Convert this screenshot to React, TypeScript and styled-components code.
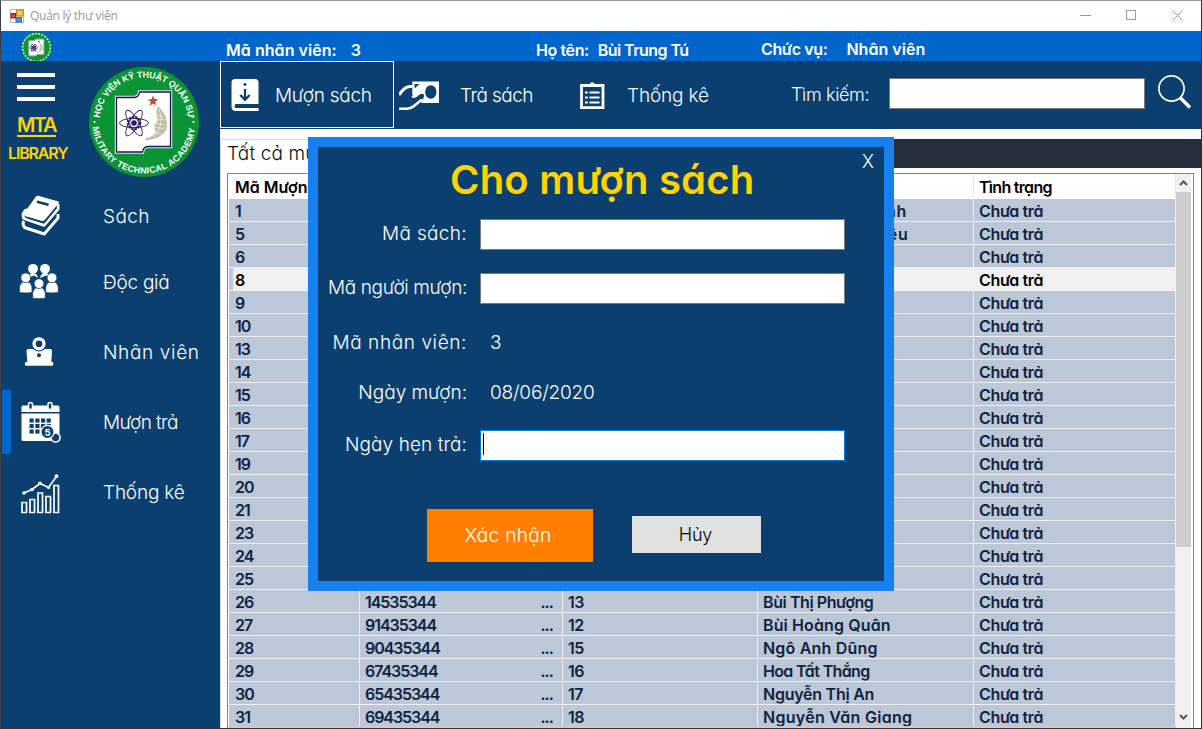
import React from 'react';
import styled, { createGlobalStyle } from 'styled-components';

const navy = '#0b3f6f';
const yellow = '#ffd200';

const Global = createGlobalStyle`
  * { box-sizing: border-box; }
  body { margin: 0; overflow: hidden; }
  body, input, button {
    font-family: Inter, 'Liberation Sans', sans-serif;
    font-feature-settings: 'cv11' 1;
  }
`;

const Window = styled.div`
  position: relative;
  width: 1202px;
  height: 729px;
  overflow: hidden;
  display: flex;
  flex-direction: column;
  background: #fff;
  border: 1px solid #9a9a9a;
  border-left-color: #3b4048;
  border-right-color: #2d3440;
  border-bottom-color: #35353a;
`;

const TitleBar = styled.header`
  flex: none;
  height: 30px;
  display: flex;
  align-items: center;
  padding-left: 9px;
  background: #fff;
`;

const Caption = styled.span`
  flex: 1;
  padding: 0 0 2px 6px;
  font: 12px 'Open Sans', sans-serif;
  letter-spacing: -0.27px;
  color: #999;
`;

const WindowButtons = styled.div`
  display: flex;
  gap: 35px;
  padding: 0 18px 2px 0;
`;

const UserBar = styled.div`
  flex: none;
  height: 30px;
  display: flex;
  background: #0066cc;
  color: #fff;
  overflow: hidden;
`;

const MiniLogoSlot = styled.div`
  width: 225px;
  padding: 1px 0 0 20px;
`;

const UserField = styled.div<{ $width: number; $gap: number; $raise?: number }>`
  width: ${p => p.$width}px;
  display: flex;
  gap: ${p => p.$gap}px;
  padding-top: ${p => 9 - (p.$raise ?? 0)}px;
  line-height: 20px;
`;

const Bold = styled.span<{ $track?: number }>`
  font-size: 16px;
  font-weight: 640;
  letter-spacing: ${p => p.$track ?? 0}px;
  white-space: pre;
`;

const Light = styled.span<{ $track?: number; $size?: number }>`
  font-size: ${p => p.$size ?? 19}px;
  font-weight: 300;
  letter-spacing: ${p => p.$track ?? 0}px;
  white-space: pre;
`;

const Body = styled.div`
  flex: 1;
  min-height: 0;
  display: flex;
`;

const Sidebar = styled.aside`
  flex: none;
  width: 219px;
  background: ${navy};
  color: #fff;
`;

const Brand = styled.div`
  height: 123px;
  display: flex;
`;

const BrandLeft = styled.div`
  width: 87px;
  padding: 12px 0 0 7px;
`;

const Burger = styled.div`
  width: 38px;
  height: 28px;
  margin-left: 9px;
  display: flex;
  flex-direction: column;
  justify-content: space-between;
`;

const BurgerBar = styled.i`
  height: 4px;
  background: #fff;
`;

const BrandLink = styled.div`
  width: max-content;
  margin: 15px 0 0 9px;
  font-size: 20px;
  line-height: 19px;
  font-weight: 600;
  letter-spacing: -1.9px;
  color: ${yellow};
  border-bottom: 2px solid ${yellow};
`;

const BrandSub = styled.div`
  margin-top: 6px;
  font-size: 16px;
  line-height: 20px;
  font-weight: 600;
  letter-spacing: -1.15px;
  color: ${yellow};
`;

const LogoSlot = styled.div`
  padding-top: 5px;
`;

const NavItem = styled.div<{ $active?: boolean; $gap?: number }>`
  height: 64px;
  margin-top: ${p => p.$gap ?? 6}px;
  margin-left: 1px;
  border-left: 9px solid ${p => (p.$active ? '#0066cc' : 'transparent')};
  display: flex;
  align-items: center;
`;

const NavIcon = styled.div<{ $dx?: number; $dy?: number }>`
  width: 92px;
  padding: ${p => p.$dy ?? 0}px 0 0 ${p => 8 + (p.$dx ?? 0)}px;
  display: flex;
`;

const Main = styled.main`
  flex: 1;
  min-width: 0;
  display: flex;
  flex-direction: column;
`;

const Toolbar = styled.div`
  flex: none;
  height: 68px;
  display: flex;
  align-items: flex-start;
  background: ${navy};
  color: #fff;
`;

const Tab = styled.div<{ $width: number; $icon: number; $pad: number; $active?: boolean }>`
  height: 67px;
  width: ${p => p.$width}px;
  display: grid;
  grid-template-columns: ${p => p.$icon}px auto;
  justify-content: start;
  align-items: center;
  padding: 2px 0 0 ${p => p.$pad}px;
  border: 1px solid ${p => (p.$active ? '#fff' : 'transparent')};
`;

const SearchLabel = styled.label`
  width: 98px;
  line-height: 68px;
  height: 68px;
`;

const SearchInput = styled.input`
  width: 256px;
  height: 31px;
  margin: 17px 13px 0 0;
  border: 1px solid #7a7a7a;
  background: #fff;
`;

const SearchIconSlot = styled.div`
  padding-top: 13px;
`;

const Panel = styled.section`
  flex: 1;
  min-height: 0;
  margin-top: 10px;
  display: flex;
  flex-direction: column;
  border-left: 1px solid #d9d9d9;
`;

const PanelHead = styled.div`
  flex: none;
  height: 29px;
  display: flex;
  background: #252e3a;
`;

const PanelTitle = styled.div`
  width: 140px;
  padding-left: 6px;
  line-height: 28px;
  background: #fff;
  color: #111;
  border-top: 1px solid #d9d9d9;
`;

const GridFrame = styled.div`
  flex: 1;
  min-height: 0;
  margin: 5px 7px 0 6px;
  display: flex;
  border: 1px solid #78859b;
  border-bottom: 0;
  padding-right: 1px;
`;

const GridBody = styled.div`
  width: 948px;
  height: 554px;
  overflow: hidden;
  border-bottom: 2px solid #cdcdcd;
`;

const GridRow = styled.div<{ $selected?: boolean; $head?: boolean }>`
  display: grid;
  grid-template-columns: 131px 203px 195px 216px 202px;
  height: ${p => (p.$head ? 25 : 23)}px;
  margin-left: 1px;
  background: ${p => (p.$head ? '#fff' : p.$selected ? '#f0f0f0' : '#bcc7d8')};
  color: ${p => (p.$head || p.$selected ? '#000' : '#10233f')};
  box-shadow: ${p => (p.$selected ? 'inset 4px 0 #bcc7d8' : 'none')};
`;

const Cell = styled.div<{ $head?: boolean }>`
  display: flex;
  align-items: center;
  justify-content: space-between;
  padding: 1px 9px 0 5px;
  overflow: hidden;
  border-right: 1px solid ${p => (p.$head ? '#e5e5e5' : '#f0f0f0')};
  border-bottom: 1px solid ${p => (p.$head ? '#fff' : '#f0f0f0')};
  &:first-child { padding-left: 6px; }
`;

const ScrollBar = styled.div`
  width: 15px;
  display: flex;
  flex-direction: column;
  align-items: center;
  background: #f0f0f0;
  padding: 6px 0 8px;
`;

const Thumb = styled.div`
  width: 15px;
  height: 355px;
  margin: 6px 0 auto;
  background: #cdcdcd;
`;

const Dialog = styled.div`
  position: absolute;
  left: 307px;
  top: 136px;
  width: 586px;
  height: 454px;
  border: 10px solid #1680ee;
  background: ${navy};
  color: #fff;
`;

const Close = styled.button`
  position: absolute;
  right: 10px;
  top: 5px;
  padding: 0;
  border: 0;
  background: none;
  color: #fff;
  font-size: 18px;
  line-height: 20px;
  font-weight: 300;
`;

const DialogTitle = styled.h1`
  margin: 0 0 0 132px;
  height: 72px;
  font-size: 40px;
  line-height: 66px;
  font-weight: 640;
  letter-spacing: 0.2px;
  color: ${yellow};
  white-space: nowrap;
`;

const FormRow = styled.div<{ $gap: number }>`
  height: 31px;
  margin-top: ${p => p.$gap}px;
  display: grid;
  grid-template-columns: 149px 365px;
  column-gap: 13px;
  align-items: center;
`;

const FieldLabel = styled.label<{ $plain?: boolean }>`
  text-align: right;
  line-height: 28px;
  padding-bottom: ${p => (p.$plain ? 0 : 1)}px;
`;

const FieldValue = styled.div`
  padding-left: 10px;
  line-height: 28px;
`;

const Field = styled.div<{ $focus?: boolean }>`
  height: 31px;
  padding: 2px;
  background: #fff;
  border: 1px solid ${p => (p.$focus ? '#0078d7' : '#7a7a7a')};
`;

const Caret = styled.i`
  display: block;
  width: 1px;
  height: 22px;
  background: #000;
`;

const Actions = styled.div`
  display: flex;
  align-items: center;
  gap: 39px;
  padding: 48px 0 0 109px;
`;

const Confirm = styled.button`
  width: 166px;
  height: 53px;
  padding: 0 4px 0 0;
  border: 0;
  background: #ff8000;
  color: #fff;
`;

const Cancel = styled.button`
  width: 129px;
  height: 37px;
  margin-top: -3px;
  padding: 0 2px 0 0;
  border: 0;
  background: #e1e1e1;
  color: #000;
`;

function AcademyLogo({ size, small }: { size: number; small?: boolean }) {
  const petals = [0, 60, 120];
  return (
    <svg width={size} height={size} viewBox="0 0 112 112">
      <defs>
        <path id="arcTop" d="M11.500 56 A44.500 44.500 0 0 1 100.500 56" />
        <path id="arcBottom" d="M4.500 56 A51.500 51.500 0 0 0 107.500 56" />
      </defs>
      <circle cx="56" cy="56" r="55" fill="#0b9435" />
      {small ? (
        <circle cx="56" cy="56" r="50" fill="none" stroke="#e4f6ea" strokeWidth="5" strokeDasharray="7 5" />
      ) : (
        <g fill="#fff" fontFamily="'Liberation Sans', sans-serif" fontWeight="700" fontSize="8.800">
          <text>
            <textPath href="#arcTop" startOffset="4" textLength="132" lengthAdjust="spacing">HỌC VIỆN KỸ THUẬT QUÂN SỰ</textPath>
          </text>
          <text>
            <textPath href="#arcBottom" startOffset="5" textLength="150" lengthAdjust="spacing">MILITARY TECHNICAL ACADEMY</textPath>
          </text>
          <circle cx="6.500" cy="56" r="1" />
          <circle cx="105.500" cy="56" r="1" />
        </g>
      )}
      <path
        d="M28.500 31.500 H46 Q51 31.500 51.500 26 H82.500 V80.500 H60 Q55.500 80.500 54.500 86 H28.500 Z"
        fill="#fff" stroke="#d9ecdf" strokeWidth="3.500"
      />
      <path
        d="M28.500 31.500 H46 Q51 31.500 51.500 26 H82.500 V80.500 H60 Q55.500 80.500 54.500 86 H28.500 Z"
        fill="#fff" stroke="#23105a" strokeWidth="1.300"
      />
      <g fill="none" stroke="#2b1a6b" strokeWidth={small ? 2.5 : 0.9}>
        {petals.map(a => (
          <ellipse key={a} cx="46" cy="57" rx="14.500" ry="4.600" transform={`rotate(${a} 46 57)`} />
        ))}
        <circle cx="46" cy="57" r="6" strokeWidth="2.400" strokeDasharray="2.200 1" />
      </g>
      <circle cx="46" cy="57" r="2.800" fill="#2b1a6b" />
      <path d="M65 29.500 l1.400 3.600 3.900.1 -3.100 2.500 1.200 3.900 -3.400-2.200 -3.300 2.300 1.100-3.900 -3.200-2.400 4-.2z" fill="#c8452f" />
      <path
        d="M70 40 Q82 52 78 64 Q74 72 58.500 74.500 L57 72.500 Q65 71 68 66 Q64 61 70 54 Q67 47 70 40Z"
        fill="#c3bca4"
      />
      <path d="M71 43 Q77 58 66 71 M68 49 l7 2 M69 53 l9 1 M67 57 l10 2 M66 61 l10 2 M65 66 l8 2" fill="none" stroke="#f1eee2" strokeWidth=".8" />
    </svg>
  );
}

const AppIcon = () => (
  <svg width="14" height="14" viewBox="0 0 14 14">
    <rect x=".5" y=".5" width="13" height="13" fill="#fff" stroke="#b5b5b5" />
    <rect x="6.500" y="1" width="6.500" height="6" fill="#fbc93d" stroke="#b98317" />
    <rect x="1" y="4.500" width="4.500" height="4.500" fill="#d44a32" stroke="#8d2113" />
    <rect x="6" y="8.500" width="5.500" height="4.500" fill="#4f8fe6" stroke="#3565b5" />
  </svg>
);

const BorrowIcon = () => (
  <svg width="28" height="33" viewBox="0 0 28 33">
    <path d="M4 0 H24 Q27.500 0 27.500 3.500 V25 H5.500 Q3.500 25 3.500 27 Q3.500 29 5.500 29 H27.500 V32 H5 Q.5 32 .5 27.500 V3.500 Q.5 0 4 0Z" fill="#fff" />
    <path d="M14 10 V20 M9.300 16 L14 20.800 L18.700 16" fill="none" stroke={navy} strokeWidth="2.300" />
    <circle cx="14" cy="5.500" r="1.400" fill={navy} />
    <path d="M4 28 H27.500" stroke={navy} strokeWidth="2" />
  </svg>
);

const ReturnIcon = () => (
  <svg width="41" height="30" viewBox="0 0 41 30">
    <path d="M13.300 .5 H40 V22 H23 L13.300 14Z" fill="#fff" />
    <ellipse cx="31.800" cy="11" rx="5.700" ry="6.800" fill={navy} />
    <path d="M15.500 3 L20.500 3 L15.500 7.500Z" fill={navy} />
    <path
      d="M0 14.500 L6 9 Q9 5.500 12.800 5.500 L12.800 16 Q15 17.500 18 15.500 L21.500 13 Q25.500 12 25 15.500 Q24.500 18 22 20 L13.500 28 H0 Z"
      fill={navy}
    />
    <path d="M0 14 Q5.500 5.500 11 5.500 H13.500" fill="none" stroke="#fff" strokeWidth="3" />
    <path d="M0 27.800 H8 Q12 27.800 15 25 L23 18.500" fill="none" stroke="#fff" strokeWidth="2.600" />
    <path d="M12.800 15.500 Q15.500 17 18.500 14.500" fill="none" stroke="#fff" strokeWidth="1.600" />
  </svg>
);

const ReportIcon = () => (
  <svg width="25" height="28" viewBox="0 0 25 28">
    <path d="M1.500 3.500 H23 V25.700 H1.500Z" fill="none" stroke="#fff" strokeWidth="2.800" />
    <path d="M6.500 5 V2 H9.500 Q12 -1.500 15 2 H18 V5Z" fill="#fff" />
    <path d="M5 10.500 H7.800 M5 15.500 H7.800 M5 20.500 H7.800 M9.500 10.500 H19.500 M9.500 15.500 H19.500 M9.500 20.500 H19.500" stroke="#fff" strokeWidth="2" />
  </svg>
);

const SearchIcon = () => (
  <svg width="34" height="36" viewBox="0 0 34 36">
    <circle cx="13.500" cy="14.500" r="12.600" fill="none" stroke="#fff" strokeWidth="1.700" />
    <path d="M22 23.500 L32 33.500" stroke="#fff" strokeWidth="3.400" />
  </svg>
);

const BooksIcon = () => (
  <svg width="42" height="42" viewBox="0 0 42 42">
    <path d="M16 1.500 Q17 .5 19 1 L38.500 6.500 Q39.500 7.500 38.500 8.500 L24.500 25.500 Q23.500 26.500 21.500 26 L4.500 21 Q5 17 7 14Z" fill="#fff" />
    <path d="M18 7 L27.500 9.500" stroke={navy} strokeWidth="2.800" strokeLinecap="round" />
    <g fill="none" stroke="#fff" strokeWidth="2.900" strokeLinejoin="round">
      <path d="M7 14.500 Q1.500 18 3.800 23.500 L24 30.300 L38 14 V9" />
      <path d="M3.800 26 Q2 29.500 4.500 32.500 L24.300 39 L38 23 V19" />
    </g>
    <path d="M8 22 L22 26.300 Q24 26.500 25 25 L37 11 V13 L24.500 28.500 L7 23.500Z" fill={navy} />
  </svg>
);

const Person = ({ x, y, back }: { x: number; y: number; back?: boolean }) => (
  <g transform={`translate(${x} ${y})`} fill="#fff" stroke={navy} strokeWidth={back ? 0 : 0.8}>
    <path d={back ? 'M-5 14 Q-4 9 0 9 Q4 9 5 14 L1 11.500Z' : 'M-6.300 19.500 V14 Q-5.500 9.500 -2 8.500 H2 Q5.500 9.500 6.300 14 V19.500 Q0 20.500 -6.300 19.500Z'} />
    <circle cx="0" cy="4.800" r="4.900" />
  </g>
);

const ReadersIcon = () => (
  <svg width="40" height="36" viewBox="0 0 40 36">
    <Person x={14} y={0} back />
    <Person x={26} y={0} back />
    <Person x={6.700} y={9} />
    <Person x={33} y={9} />
    <Person x={20} y={14.800} />
  </svg>
);

const StaffIcon = () => (
  <svg width="42" height="30" viewBox="0 0 42 30">
    <circle cx="20" cy="6.800" r="5" fill="none" stroke="#fff" strokeWidth="3.300" />
    <path d="M7.500 14 Q7.500 12 9.500 12 H14 Q20 17 26 12 H31 Q33 12 33 14 L32.300 25 H34 Q35 27 33.500 28.800 H6.500 Q5 27 6.500 25 H8.300Z" fill="#fff" />
    <circle cx="20" cy="18.300" r="2" fill={navy} />
  </svg>
);

const CalendarIcon = () => (
  <svg width="42" height="42" viewBox="0 0 42 42">
    <path d="M3 4.500 H38 Q39.500 4.500 39.500 6 V11 H1.500 V6 Q1.500 4.500 3 4.500Z M1.500 12.500 H39.500 V40 H3 Q1.500 40 1.500 38.500Z" fill="#fff" />
    <g fill={navy} stroke="#fff" strokeWidth="1.500">
      <rect x="8.500" y="1.500" width="4" height="7" rx="2" />
      <rect x="28" y="1.500" width="4" height="7" rx="2" />
    </g>
    {[17.5, 23, 28.5].map(y =>
      [9.5, 15.3, 21, 26.6].map(x => <rect key={`${x}-${y}`} x={x} y={y} width="4.200" height="4.100" fill={navy} />),
    )}
    <circle cx="35.500" cy="36.500" r="4.500" fill={navy} stroke="#fff" strokeWidth="1.600" />
    <circle cx="27.500" cy="31" r="6.600" fill={navy} stroke="#fff" strokeWidth="1.200" />
    <text x="27.500" y="34.500" textAnchor="middle" fill="#fff" fontSize="9.500" fontWeight="700">5</text>
  </svg>
);

const ChartIcon = () => (
  <svg width="42" height="42" viewBox="0 0 42 42">
    <g fill="none" stroke="#fff" strokeWidth="1.700">
      <path d="M2 39.500 V29.500 H6.500 V39.500Z M10 39.500 V26.500 H14.500 V39.500Z M18 39.500 V20 H22.500 V39.500Z M26 39.500 V23.500 H30.500 V39.500Z M34 39.500 V12.500 H38.500 V39.500Z" />
      <path d="M4 20 L12 16.500 L20 10.500 L28.500 14.500 L36.500 3.500" />
    </g>
    <g fill="#fff">
      <circle cx="4" cy="20" r="1.800" />
      <circle cx="12" cy="16.500" r="1.800" />
      <circle cx="20" cy="10.300" r="1.900" />
      <circle cx="28.500" cy="14.500" r="1.600" />
      <circle cx="36.500" cy="3.200" r="1.900" />
    </g>
  </svg>
);

const Chevron = ({ up }: { up?: boolean }) => (
  <svg width="9" height="6" viewBox="0 0 9 6">
    <path d={up ? 'M1 5 L4.500 1.500 L8 5' : 'M1 1 L4.500 4.500 L8 1'} fill="none" stroke="#555" strokeWidth="2" />
  </svg>
);

type Loan = { id: string; book?: string; reader?: string; name?: string; track?: number };

const loans: Loan[] = [
  { id: '1', name: 'Nguyễn Văn Ninh', track: 0.6 },
  { id: '5', name: 'Nguyễn Văn Hiệu', track: 0.75 },
  { id: '6' }, { id: '8' }, { id: '9' }, { id: '10' }, { id: '13' }, { id: '14' }, { id: '15' },
  { id: '16' }, { id: '17' }, { id: '19' }, { id: '20' }, { id: '21' }, { id: '23' }, { id: '24' }, { id: '25' },
  { id: '26', book: '14535344', reader: '13', name: 'Bùi Thị Phượng', track: -0.42 },
  { id: '27', book: '91435344', reader: '12', name: 'Bùi Hoàng Quân', track: 0.12 },
  { id: '28', book: '90435344', reader: '15', name: 'Ngô Anh Dũng', track: 0.2 },
  { id: '29', book: '67435344', reader: '16', name: 'Hoa Tất Thắng', track: -0.65 },
  { id: '30', book: '65435344', reader: '17', name: 'Nguyễn Thị An', track: -0.25 },
  { id: '31', book: '69435344', reader: '18', name: 'Nguyễn Văn Giang', track: 0.28 },
];

export default function App() {
  return (
    <>
      <Global />
      <Window>
        <TitleBar>
          <AppIcon />
          <Caption>Quản lý thư viện</Caption>
          <WindowButtons>
            <svg width="11" height="11"><path d="M0 5.500H11" stroke="#999" /></svg>
            <svg width="11" height="11"><rect x=".5" y=".5" width="9" height="9" fill="none" stroke="#999" /></svg>
            <svg width="11" height="11"><path d="M.5 .5L10.500 10.500M10.500 .5L.5 10.500" stroke="#999" /></svg>
          </WindowButtons>
        </TitleBar>

        <UserBar>
          <MiniLogoSlot><AcademyLogo size={31} small /></MiniLogoSlot>
          <UserField $width={310} $gap={14}><Bold $track={0.05}>Mã nhân viên:</Bold><Bold>3</Bold></UserField>
          <UserField $width={225} $gap={9}><Bold $track={-0.4}>Họ tên:</Bold><Bold $track={-0.55}>Bùi Trung Tú</Bold></UserField>
          <UserField $width={300} $gap={19} $raise={1}><Bold $track={-0.4}>Chức vụ:</Bold><Bold $track={0.05}>Nhân viên</Bold></UserField>
        </UserBar>

        <Body>
          <Sidebar>
            <Brand>
              <BrandLeft>
                <Burger><BurgerBar /><BurgerBar /><BurgerBar /></Burger>
                <BrandLink>MTA</BrandLink>
                <BrandSub>LIBRARY</BrandSub>
              </BrandLeft>
              <LogoSlot><AcademyLogo size={112} /></LogoSlot>
            </Brand>
            <NavItem $gap={0}><NavIcon $dx={1}><BooksIcon /></NavIcon><Light $track={0.4}>Sách</Light></NavItem>
            <NavItem $gap={2}><NavIcon><ReadersIcon /></NavIcon><Light $track={-0.25}>Độc giả</Light></NavItem>
            <NavItem><NavIcon><StaffIcon /></NavIcon><Light $track={0.65}>Nhân viên</Light></NavItem>
            <NavItem $active><NavIcon $dx={1}><CalendarIcon /></NavIcon><Light $track={-0.6}>Mượn trả</Light></NavItem>
            <NavItem><NavIcon $dx={1} $dy={3}><ChartIcon /></NavIcon><Light $track={-0.2}>Thống kê</Light></NavItem>
          </Sidebar>

          <Main>
            <Toolbar>
              <Tab $width={174} $pad={10} $icon={44} $active><BorrowIcon /><Light $track={-0.25}>Mượn sách</Light></Tab>
              <Tab $width={185} $pad={4} $icon={61}><ReturnIcon /><Light $track={-0.55}>Trả sách</Light></Tab>
              <Tab $width={212} $pad={0} $icon={47}><ReportIcon /><Light $track={-0.15}>Thống kê</Light></Tab>
              <SearchLabel><Light $size={18} $track={-0.35}>Tìm kiếm:</Light></SearchLabel>
              <SearchInput />
              <SearchIconSlot><SearchIcon /></SearchIconSlot>
            </Toolbar>

            <Panel>
              <PanelHead><PanelTitle><Light $track={0.1}>Tất cả mượn</Light></PanelTitle></PanelHead>
              <GridFrame>
                <GridBody>
                  <GridRow $head>
                    <Cell $head><Bold>Mã Mượn</Bold></Cell>
                    <Cell $head /><Cell $head /><Cell $head />
                    <Cell $head><Bold $track={-0.7}>Tình trạng</Bold></Cell>
                  </GridRow>
                  {loans.map(l => (
                    <GridRow key={l.id} $selected={l.id === '8'}>
                      <Cell><Bold $track={-0.95}>{l.id}</Bold></Cell>
                      <Cell>{l.book && <><Bold $track={-1.05}>{l.book}</Bold><Bold $track={-0.9}>...</Bold></>}</Cell>
                      <Cell>{l.reader && <Bold $track={-0.6}>{l.reader}</Bold>}</Cell>
                      <Cell>{l.name && <Bold $track={l.track}>{l.name}</Bold>}</Cell>
                      <Cell><Bold $track={-0.33}>Chưa trả</Bold></Cell>
                    </GridRow>
                  ))}
                </GridBody>
                <ScrollBar><Chevron up /><Thumb /><Chevron /></ScrollBar>
              </GridFrame>
            </Panel>
          </Main>
        </Body>

        <Dialog>
          <Close>X</Close>
          <DialogTitle>Cho mượn sách</DialogTitle>
          <FormRow $gap={0}><FieldLabel><Light $track={0.34}>Mã sách:</Light></FieldLabel><Field /></FormRow>
          <FormRow $gap={23}><FieldLabel><Light $track={-0.36}>Mã người mượn:</Light></FieldLabel><Field /></FormRow>
          <FormRow $gap={23}><FieldLabel $plain><Light $track={0.6}>Mã nhân viên:</Light></FieldLabel><FieldValue><Light>3</Light></FieldValue></FormRow>
          <FormRow $gap={19}><FieldLabel $plain><Light>Ngày mượn:</Light></FieldLabel><FieldValue><Light $track={-0.2}>08/06/2020</Light></FieldValue></FormRow>
          <FormRow $gap={22}><FieldLabel><Light $track={0.08}>Ngày hẹn trả:</Light></FieldLabel><Field $focus><Caret /></Field></FormRow>
          <Actions>
            <Confirm><Light $track={0.32}>Xác nhận</Light></Confirm>
            <Cancel><Light $size={18} $track={-0.2}>Hủy</Light></Cancel>
          </Actions>
        </Dialog>
      </Window>
    </>
  );
}
